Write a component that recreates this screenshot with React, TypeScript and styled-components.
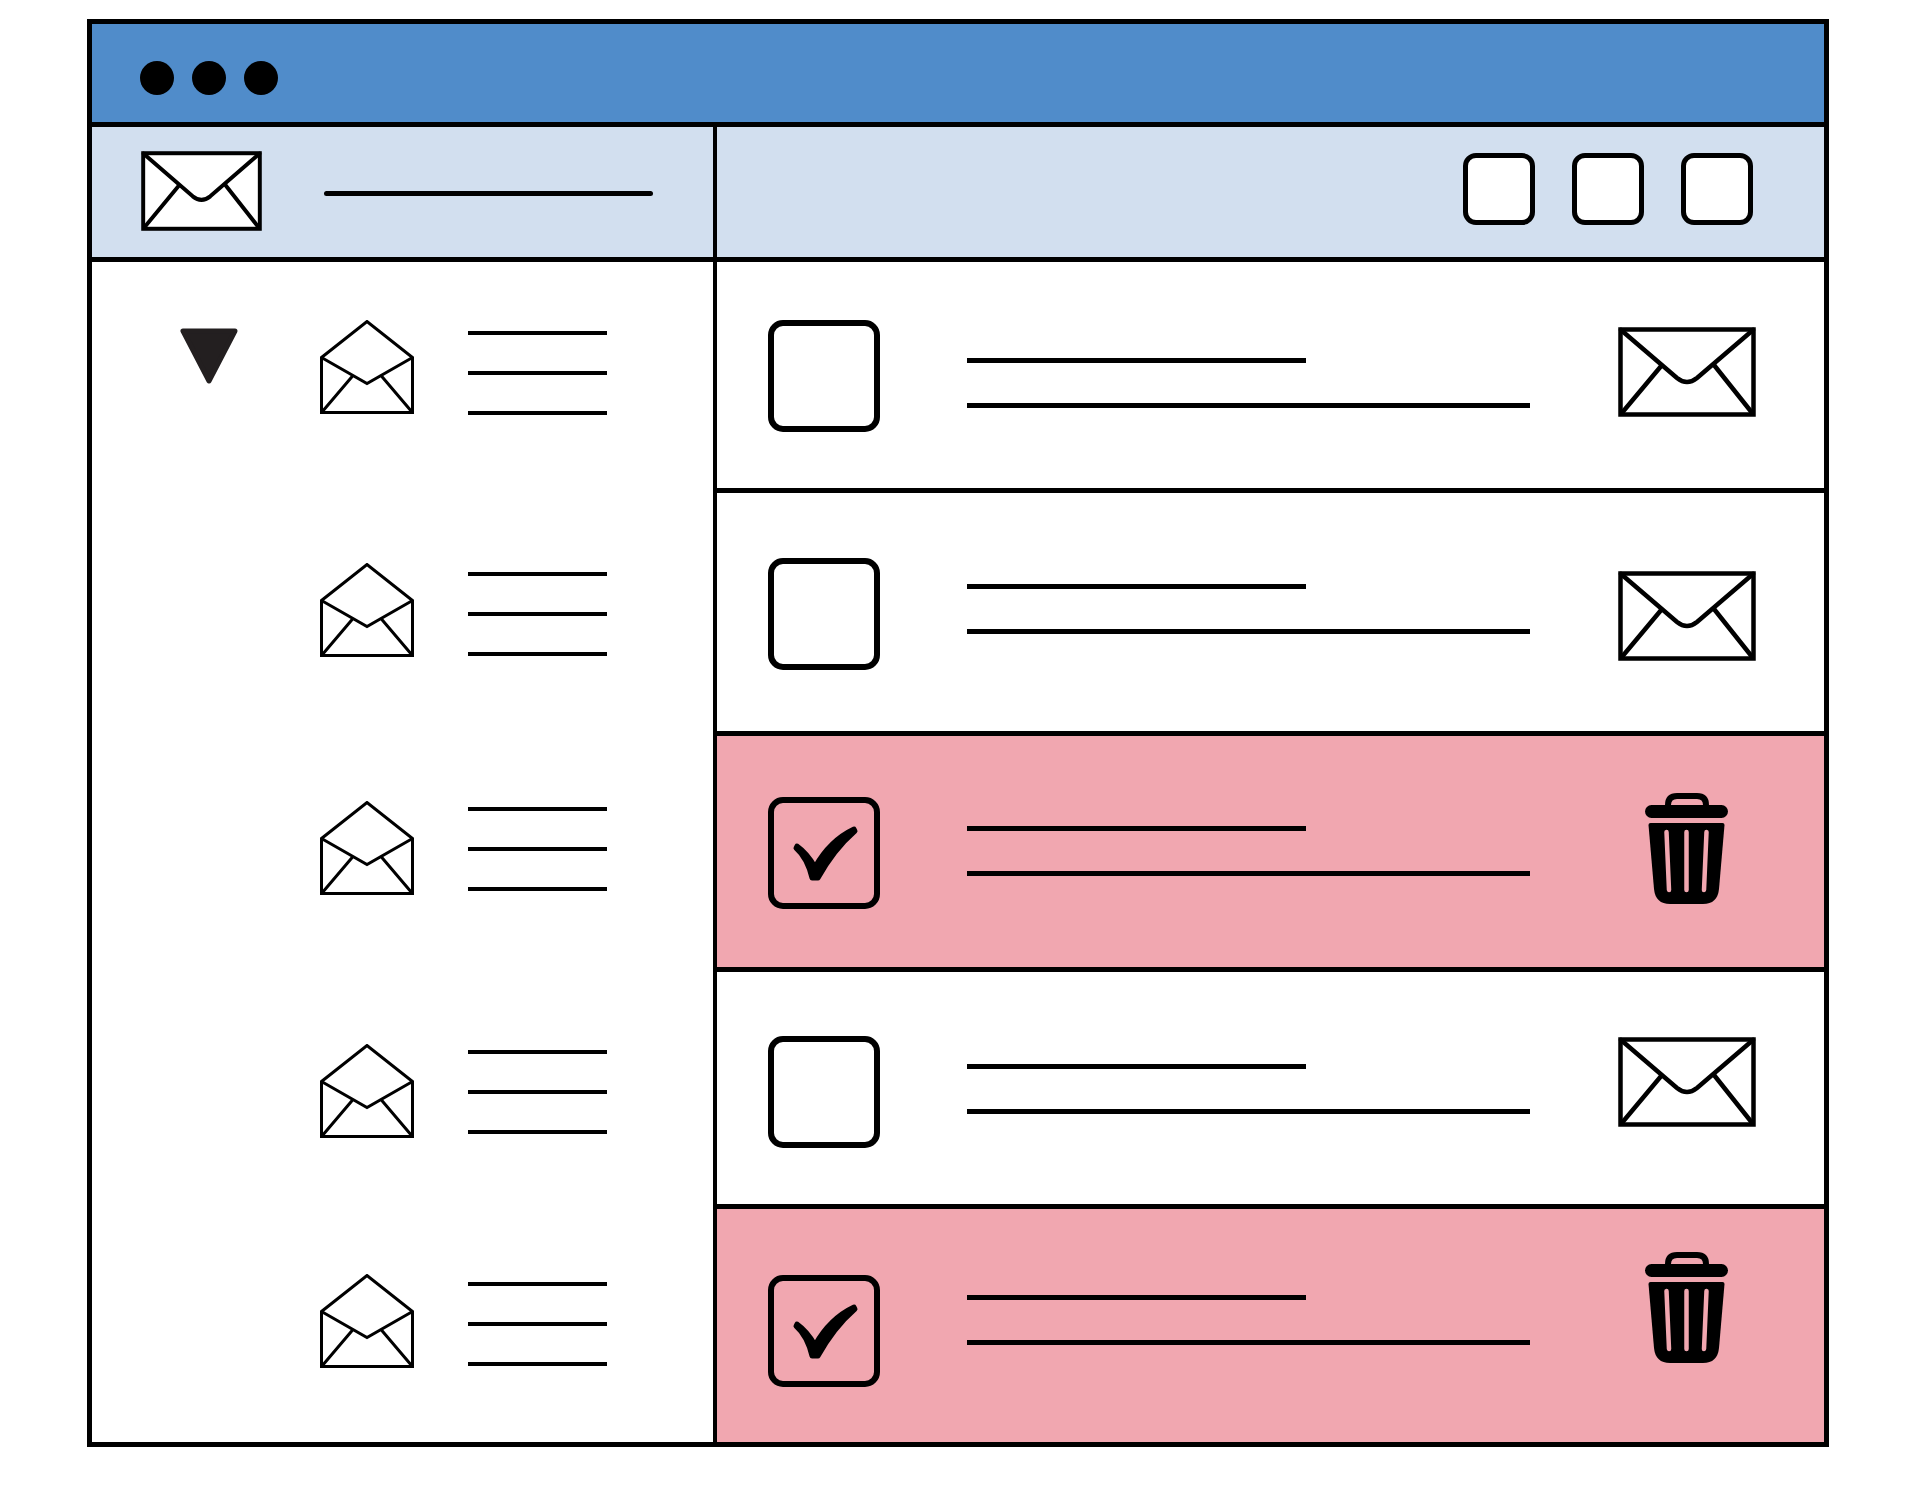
import React from "react";
import styled, { createGlobalStyle } from "styled-components";

const GlobalStyle = createGlobalStyle`
    html, body {
        margin: 0;
        padding: 0;
        background: #fff;
        font-family: "Liberation Sans", sans-serif;
    }
`;

const Frame = styled.div`
    box-sizing: border-box;
    width: 1742px;
    height: 1428px;
    margin: 19px 0 48px 87px;
    display: flex;
    flex-direction: column;
    border: 5px solid #000;
    background: #fff;
`;

const TitleBar = styled.div`
    flex: none;
    box-sizing: border-box;
    height: 103px;
    padding: 37px 0 0 48px;
    display: flex;
    gap: 18px;
    background: #508cca;
    border-bottom: 5px solid #000;
`;

const Dot = styled.span`
    width: 34px;
    height: 34px;
    border-radius: 50%;
    background: #000;
`;

const Body = styled.div`
    flex: 1;
    display: flex;
    min-height: 0;
`;

const Sidebar = styled.div`
    flex: none;
    box-sizing: border-box;
    width: 625px;
    display: flex;
    flex-direction: column;
    border-right: 4px solid #000;
`;

const Main = styled.div`
    flex: 1;
    display: flex;
    flex-direction: column;
    min-width: 0;
`;

const Toolbar = styled.div<{ $end?: boolean }>`
    flex: none;
    box-sizing: border-box;
    height: 135px;
    display: flex;
    align-items: center;
    justify-content: ${p => (p.$end ? "flex-end" : "flex-start")};
    padding: ${p => (p.$end ? "0 71px 6px 0" : "0 0 2px 49px")};
    gap: ${p => (p.$end ? "37px" : "62px")};
    background: #d2dfef;
    border-bottom: 5px solid #000;
`;

const TitleLine = styled.span`
    width: 329px;
    height: 5px;
    margin-top: 5px;
    border-radius: 3px;
    background: #000;
`;

const ToolButton = styled.button`
    box-sizing: border-box;
    width: 72px;
    height: 72px;
    padding: 0;
    border: 5px solid #000;
    border-radius: 13px;
    background: #fff;
`;

const FolderList = styled.div`
    flex: 1;
    padding-top: 58px;
`;

const FolderRow = styled.div<{ $height: number }>`
    height: ${p => p.$height}px;
    display: flex;
    align-items: flex-start;
    padding-left: 88px;
`;

const ArrowSlot = styled.div`
    flex: none;
    width: 140px;
    padding-top: 8px;
`;

const FolderLines = styled.div<{ $top: number }>`
    display: flex;
    flex-direction: column;
    gap: 36px;
    margin: ${p => p.$top}px 0 0 54px;
`;

const FolderLine = styled.span`
    width: 139px;
    height: 4px;
    background: #000;
`;

const MailRow = styled.div<{ $height: number; $checked: boolean; $last: boolean }>`
    flex: none;
    box-sizing: border-box;
    height: ${p => p.$height}px;
    display: flex;
    align-items: flex-start;
    padding-left: 51px;
    background: ${p => (p.$checked ? "#f1a7b0" : "#fff")};
    border-bottom: ${p => (p.$last ? "none" : "5px solid #000")};
`;

const CheckBox = styled.div<{ $top: number }>`
    flex: none;
    box-sizing: border-box;
    width: 112px;
    height: 112px;
    margin-top: ${p => p.$top}px;
    border: 6px solid #000;
    border-radius: 15px;
    background: transparent;
`;

const MailLines = styled.div<{ $top: number }>`
    display: flex;
    flex-direction: column;
    gap: 40px;
    margin: ${p => p.$top}px 0 0 87px;
`;

const MailLine = styled.span<{ $long?: boolean }>`
    display: block;
    width: ${p => (p.$long ? "563px" : "339px")};
    height: 5px;
    background: #000;
`;

const RowIcon = styled.div<{ $top: number; $right: number }>`
    margin: ${p => p.$top}px ${p => p.$right}px 0 auto;
    line-height: 0;
`;

const ClosedEnvelope = ({ width, height }: { width: number; height: number }) => (
    <svg width={width} height={height} viewBox="0 0 138 90" preserveAspectRatio="none">
        <rect x="2.5" y="2.5" width="133" height="85" fill="#fff" stroke="#000" strokeWidth="4.5" />
        <path
            d="M3 3 L59 51 Q69 59 79 51 L135 3"
            fill="none"
            stroke="#000"
            strokeWidth="4.5"
            strokeLinecap="round"
        />
        <path d="M44 38 L3 87 M96 38 L135 87" fill="none" stroke="#000" strokeWidth="4.5" />
    </svg>
);

const OpenEnvelope = () => (
    <svg width="94" height="94" viewBox="0 0 94 94" style={{ flex: "none" }}>
        <path
            d="M1.5 37.5 L47 1.5 L92.5 37.5 V92.5 H1.5 Z"
            fill="#fff"
            stroke="#000"
            strokeWidth="3"
            strokeLinejoin="miter"
        />
        <path
            d="M1.5 37.5 L47 63.5 L92.5 37.5 M33 55.5 L2 92 M61 55.5 L92 92"
            fill="none"
            stroke="#000"
            strokeWidth="3"
        />
    </svg>
);

const Arrow = () => (
    <svg width="58" height="56" viewBox="0 0 58 56" style={{ display: "block" }}>
        <path
            d="M3 3 H55 L29 53 Z"
            fill="#231f20"
            stroke="#231f20"
            strokeWidth="5"
            strokeLinejoin="round"
        />
    </svg>
);

const Trash = () => (
    <svg width="83" height="111" viewBox="0 0 83 111">
        <path
            d="M23 16 V12 Q23 3 32 3 H52 Q61 3 61 12 V16"
            fill="none"
            stroke="#000"
            strokeWidth="6"
        />
        <rect x="0" y="12" width="83" height="13" rx="6.5" fill="#000" />
        <path
            d="M5.5 30 H77.5 Q79.5 30 79.5 32 L74 96 Q72.5 111 58 111 H25 Q10.5 111 9 96 L3.5 32 Q3.5 30 5.5 30 Z"
            fill="#000"
        />
        <path
            d="M21.5 39 L24 97 M41.5 39 V97 M61.5 39 L59 97"
            fill="none"
            stroke="#f1a7b0"
            strokeWidth="4.5"
            strokeLinecap="round"
        />
    </svg>
);

const Check = () => (
    <svg width="100" height="100" viewBox="1 1 100 100" style={{ display: "block" }}>
        <path
            d="M24 44 C31 49 37 56 42 65 C52 47 64 35 81 27 L82 29 C67 42 55 58 45 76 L39 76 C36 63 31 53 23 46 Z"
            fill="#000"
            stroke="#000"
            strokeWidth="5"
            strokeLinejoin="round"
        />
    </svg>
);

const folders = [
    { height: 243, lines: 11, arrow: true },
    { height: 238, lines: 9 },
    { height: 243, lines: 6 },
    { height: 230, lines: 6 },
    { height: 160, lines: 8 },
];

const mails = [
    { height: 231, check: 58, lines: 96, icon: 65 },
    { height: 243, check: 65, lines: 91, icon: 78 },
    { height: 236, check: 61, lines: 90, icon: 57, checked: true },
    { height: 237, check: 64, lines: 92, icon: 65 },
    { height: 233, check: 66, lines: 86, icon: 43, checked: true },
];

const App: React.FC = () => (
    <>
        <GlobalStyle />
        <Frame>
            <TitleBar>
                <Dot />
                <Dot />
                <Dot />
            </TitleBar>
            <Body>
                <Sidebar>
                    <Toolbar>
                        <ClosedEnvelope width={121} height={80} />
                        <TitleLine />
                    </Toolbar>
                    <FolderList>
                        {folders.map((f, i) => (
                            <FolderRow key={i} $height={f.height}>
                                <ArrowSlot>{f.arrow && <Arrow />}</ArrowSlot>
                                <OpenEnvelope />
                                <FolderLines $top={f.lines}>
                                    <FolderLine />
                                    <FolderLine />
                                    <FolderLine />
                                </FolderLines>
                            </FolderRow>
                        ))}
                    </FolderList>
                </Sidebar>
                <Main>
                    <Toolbar $end>
                        <ToolButton />
                        <ToolButton />
                        <ToolButton />
                    </Toolbar>
                    {mails.map((m, i) => (
                        <MailRow
                            key={i}
                            $height={m.height}
                            $checked={!!m.checked}
                            $last={i === mails.length - 1}
                        >
                            <CheckBox $top={m.check}>{m.checked && <Check />}</CheckBox>
                            <MailLines $top={m.lines}>
                                <MailLine />
                                <MailLine $long />
                            </MailLines>
                            {m.checked ? (
                                <RowIcon $top={m.icon} $right={96}>
                                    <Trash />
                                </RowIcon>
                            ) : (
                                <RowIcon $top={m.icon} $right={68}>
                                    <ClosedEnvelope width={138} height={90} />
                                </RowIcon>
                            )}
                        </MailRow>
                    ))}
                </Main>
            </Body>
        </Frame>
    </>
);

export default App;
